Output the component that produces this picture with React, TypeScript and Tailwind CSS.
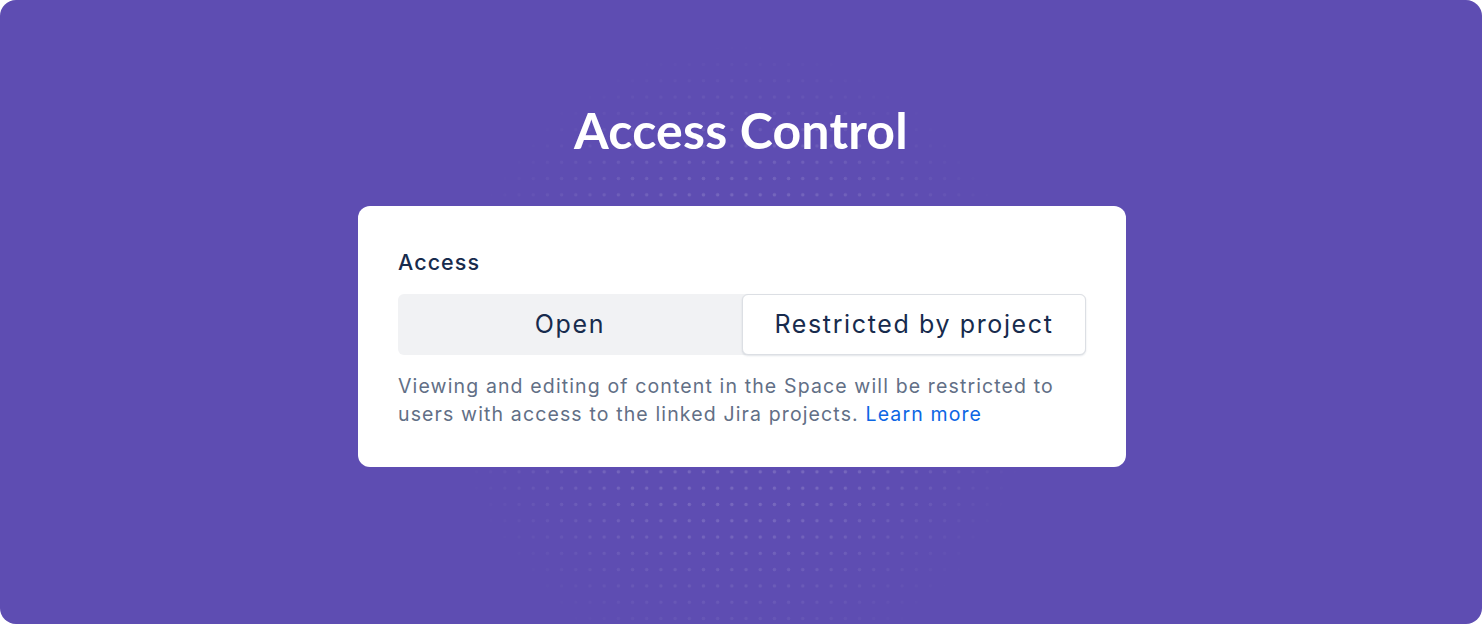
const App = () => {
  return (
    <div className="w-[1482px] h-[624px] bg-white">
      <div className="relative w-full h-full rounded-[16px] bg-[#5E4DB2] overflow-hidden flex flex-col items-center">
        {/* dotted glow behind the card */}
        <div className="absolute left-[441px] top-[40px] w-[600px] h-[640px] bg-[radial-gradient(circle,rgba(255,255,255,0.15)_1.7px,transparent_2px)] bg-[length:14.2px_16.3px] [mask-image:radial-gradient(ellipse_50%_50%_at_50%_50%,black_50%,transparent_100%)] pointer-events-none" />

        <h1 className="relative z-10 pt-[100px] text-[50px] leading-[60px] font-bold text-white font-['Lato',sans-serif] tracking-[0.2px]">
          Access Control
        </h1>

        <div className="relative z-10 mt-[46px] ml-[2px] w-[768px] rounded-[12px] bg-white px-10 pt-[41px] pb-[39px] font-['Inter',sans-serif]">
          <div className="text-[21.5px] leading-[30px] font-medium tracking-[0.05em] text-[#172B4D]">
            Access
          </div>
          <div className="mt-[17px] h-[61px] grid grid-cols-2 rounded-[6px] bg-[#F1F2F4]">
            <button className="flex items-center justify-center text-[25px] tracking-[0.065em] text-[#172B4D]">
              Open
            </button>
            <button className="flex items-center justify-center rounded-[6px] border border-[#DCDFE4] bg-white text-[25px] tracking-[0.065em] text-[#172B4D] shadow-[0_1px_2px_rgba(9,30,66,0.12)]">
              Restricted by project
            </button>
          </div>
          <p className="mt-[17px] text-[19.5px] leading-[28px] tracking-[0.058em] text-[#626F86]">
            Viewing and editing of content in the Space will be restricted to
            users with access to the linked Jira projects.{" "}
            <a href="#" className="text-[#0C66E4]">
              Learn more
            </a>
          </p>
        </div>
      </div>
    </div>
  );
};

export default App;
